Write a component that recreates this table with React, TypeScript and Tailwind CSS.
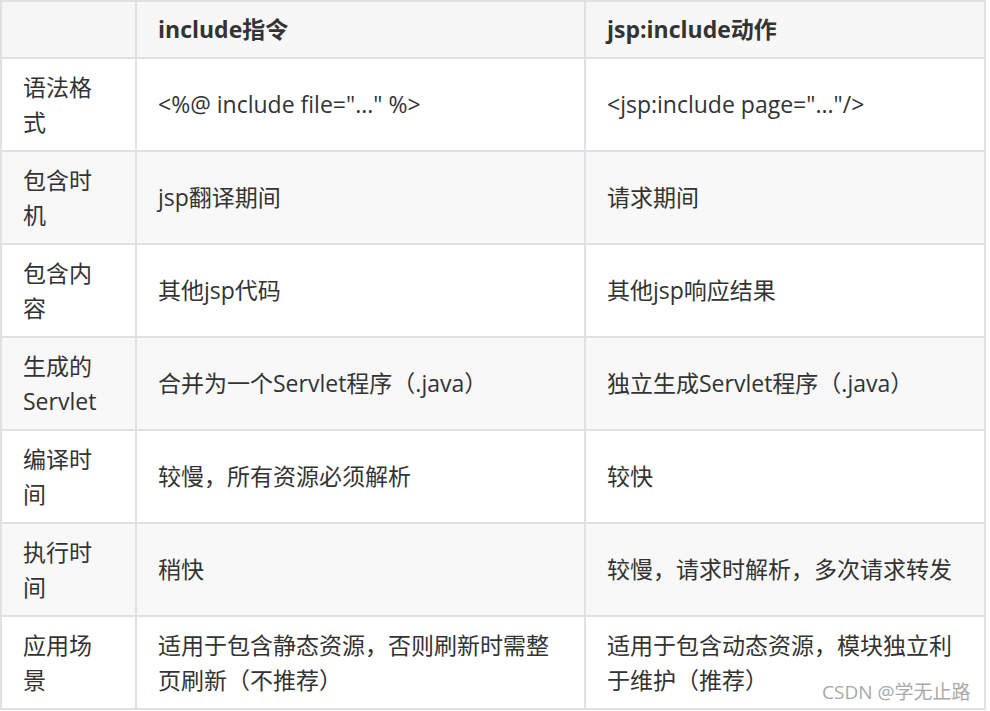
const rows: { head: string[]; a: string[]; b: string[] }[] = [
    { head: ['语法格', '式'], a: ['<%@ include file="..." %>'], b: ['<jsp:include page="..."/>'] },
    { head: ['包含时', '机'], a: ['jsp翻译期间'], b: ['请求期间'] },
    { head: ['包含内', '容'], a: ['其他jsp代码'], b: ['其他jsp响应结果'] },
    { head: ['生成的', 'Servlet'], a: ['合并为一个Servlet程序（.java）'], b: ['独立生成Servlet程序（.java）'] },
    { head: ['编译时', '间'], a: ['较慢，所有资源必须解析'], b: ['较快'] },
    { head: ['执行时', '间'], a: ['稍快'], b: ['较慢，请求时解析，多次请求转发'] },
    { head: ['应用场', '景'], a: ['适用于包含静态资源，否则刷新时需整', '页刷新（不推荐）'], b: ['适用于包含动态资源，模块独立利', '于维护（推荐）'] },
]

function Cell({ lines, bg }: { lines: string[]; bg: string }) {
    return (
        <div className={`flex h-[91px] items-center pl-[21px] pr-2 ${bg}`}>
            <div className="leading-[35px]">
                {lines.map((l, i) => (
                    <div key={i} className="whitespace-pre">{l}</div>
                ))}
            </div>
        </div>
    )
}

export default function App() {
    return (
        <div
            className="relative min-h-[711px] bg-white text-[23px] text-[#333333]"
            style={{ fontFamily: '"Open Sans", "Noto Sans CJK SC", sans-serif' }}
        >
            <div className="grid w-[986px] grid-cols-[133px_447px_398px] gap-[2px] bg-[#dfe2e5] p-[2px]">
                <div className="h-[55px] bg-[#f7f7f7]" />
                <div className="flex h-[55px] items-center bg-[#f7f7f7] pl-[21px] font-bold leading-[35px]">include指令</div>
                <div className="flex h-[55px] items-center bg-[#f7f7f7] pl-[21px] font-bold leading-[35px]">jsp:include动作</div>
                {rows.map((r, i) => {
                    const bg = i % 2 === 1 ? 'bg-[#f8f8f8]' : 'bg-white'
                    return [
                        <Cell key={`h${i}`} lines={r.head} bg={bg} />,
                        <Cell key={`a${i}`} lines={r.a} bg={bg} />,
                        <Cell key={`b${i}`} lines={r.b} bg={bg} />,
                    ]
                })}
            </div>
            <div className="absolute left-[822px] top-[678px] text-[19px] leading-[28px] text-[#a9a9a9]">
                CSDN @学无止路
            </div>
        </div>
    )
}
